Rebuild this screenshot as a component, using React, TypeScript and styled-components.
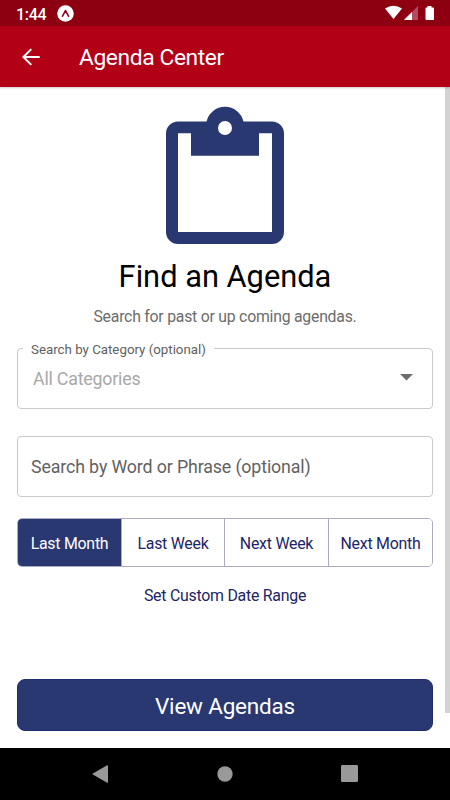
import React from "react";
import styled, { createGlobalStyle } from "styled-components";

const GlobalStyle = createGlobalStyle`
  *, *::before, *::after { box-sizing: border-box; }
  body { margin: 0; background: #fff; font-family: Roboto, "Liberation Sans", sans-serif; }
  button { font-family: inherit; padding: 0; }
  svg { display: block; flex: none; }
`;

const Screen = styled.div`
  width: 450px;
  height: 800px;
  display: flex;
  flex-direction: column;
  overflow: hidden;
  background: #fff;
`;

const StatusBar = styled.div`
  height: 26px;
  flex: none;
  display: flex;
  align-items: center;
  padding: 0 15px 0 16px;
  background: #8d0012;
  color: #fff;
`;

const Clock = styled.span`
  width: 41px;
  padding-top: 3px;
  font-size: 16px;
  letter-spacing: -0.3px;
  line-height: 23px;
  font-weight: 500;
`;

const StatusIcons = styled.div`
  margin-left: auto;
  display: flex;
  align-items: center;
`;

const AppBar = styled.header`
  position: relative;
  height: 61px;
  flex: none;
  display: flex;
  align-items: center;
  padding: 0 22px;
  background: #b20017;
  color: #fff;
  box-shadow: 0 1px 2px rgba(0, 0, 0, 0.2);
`;

const BackButton = styled.button`
  width: 57px;
  border: 0;
  background: none;
  color: inherit;
`;

const AppTitle = styled.h1`
  margin: 0;
  font-size: 22.8px;
  letter-spacing: -0.4px;
  line-height: 30px;
  font-weight: 400;
  padding-top: 3px;
`;

const Body = styled.div`
  height: 661px;
  flex: none;
  display: flex;
`;

const Content = styled.main`
  width: 446px;
  padding: 19px 13px 0 17px;
  display: flex;
  flex-direction: column;
  align-items: center;
`;

const ScrollThumb = styled.div`
  width: 5px;
  margin-left: -1px;
  height: 626px;
  background: #d3d3d3;
`;

const Heading = styled.h2`
  margin: 14px 0 0;
  font-size: 30.8px;
  line-height: 38px;
  font-weight: 400;
  color: #000;
  white-space: nowrap;
`;

const Subtitle = styled.p`
  margin: 11px 0 0;
  font-size: 15.8px;
  letter-spacing: -0.23px;
  line-height: 20px;
  color: #6c6c6c;
  white-space: nowrap;
`;

const SelectField = styled.fieldset`
  width: 416px;
  height: 69px;
  margin: 13px 0 0;
  padding: 0 19px 0 15px;
  border: 1px solid #cacaca;
  border-radius: 4px;
  flex: none;
`;

const Legend = styled.legend`
  margin-left: -10px;
  padding: 2px 8px 0;
  font-size: 13.3px;
  line-height: 15px;
  letter-spacing: 0;
  color: #606060;
  white-space: nowrap;
`;

const SelectValue = styled.div`
  height: 43px;
  display: flex;
  align-items: center;
  justify-content: space-between;
  font-size: 17.8px;
  letter-spacing: -0.2px;
  color: #a8a8a8;

  svg { margin-bottom: 3px; }
`;

const TextField = styled.input`
  width: 416px;
  height: 61px;
  flex: none;
  margin: 27px 0 0;
  padding: 0 13px;
  border: 1px solid #cacaca;
  border-radius: 4px;
  font-family: inherit;
  font-size: 17.8px;
  letter-spacing: -0.13px;
  background: #fff;
  &::placeholder { color: #626262; opacity: 1; }
`;

const Segments = styled.div`
  width: 416px;
  height: 49px;
  flex: none;
  margin-top: 21px;
  display: grid;
  grid-template-columns: 104px 103px 104px 103px;
  border: 1px solid #aaaac2;
  border-radius: 5px;
  overflow: hidden;
`;

const Segment = styled.button<{ $active?: boolean }>`
  border: 0;
  border-right: 1px solid #aaaac2;
  background: ${(p) => (p.$active ? "#293870" : "#fff")};
  color: ${(p) => (p.$active ? "#fff" : "#1c2568")};
  font-size: 15.9px;
  letter-spacing: -0.25px;
  white-space: nowrap;
  padding-top: 1px;
  &:last-child { border-right: 0; }
`;

const RangeLink = styled.button`
  margin-top: 19px;
  border: 0;
  background: none;
  color: #1c2568;
  font-size: 15.9px;
  letter-spacing: -0.25px;
  line-height: 20px;
  white-space: nowrap;
`;

const PrimaryButton = styled.button`
  width: 416px;
  height: 52px;
  margin-top: auto;
  margin-bottom: 17px;
  padding-top: 1px;
  flex: none;
  border: 1px solid #202e70;
  border-radius: 8px;
  background: #293870;
  color: #fff;
  font-size: 22.5px;
  letter-spacing: -0.2px;
`;

const NavBar = styled.nav`
  height: 52px;
  flex: none;
  display: flex;
  justify-content: center;
  align-items: center;
  gap: 108px;
  padding: 0 1px 1px 0;
  background: #000;
`;

const ExpoIcon = () => (
  <svg width="17" height="17" viewBox="0 0 17 17">
    <circle cx="8.5" cy="8.5" r="8.3" fill="#fff" />
    <path d="M5.5 11.2 8.5 5.5 11.5 11.2" fill="none" stroke="#8d0012" strokeWidth="1.6" strokeLinecap="round" strokeLinejoin="round" />
  </svg>
);

const ConnectivityIcons = () => (
  <svg width="50" height="16" viewBox="385 5 50 16">
    <path d="M385 8.500Q393.500 3.100 402 8.500L393.500 19Z" fill="#fff" />
    <path d="M418 6V20H404Z" fill="#b54b5b" />
    <path d="M412 12V20H404Z" fill="#fff" />
    <path d="M427.500 6H431.500V7.500H433.200Q434 7.500 434 8.300V19.200Q434 20 433.200 20H426.300Q425.500 20 425.500 19.200V8.300Q425.500 7.500 426.300 7.500H427.500Z" fill="#fff" />
  </svg>
);

const BackIcon = () => (
  <svg width="19" height="18" viewBox="0 0 19 18">
    <path d="M17.700 9H1.500M9.300 1.100 1.400 9 9.300 16.900" fill="none" stroke="#fff" strokeWidth="2" />
  </svg>
);

const ClipboardIcon = () => (
  <svg width="118" height="138" viewBox="166 106 118 138">
    <path
      fill="#293870"
      fillRule="evenodd"
      d="M178 121.500H206.500A19 19 0 0 1 243.500 121.500H272A12 12 0 0 1 284 133.500V232A12 12 0 0 1 272 244H178A12 12 0 0 1 166 232V133.500A12 12 0 0 1 178 121.500ZM178 133.300V232H272V133.300H259V155.700H191V133.300ZM232 128A7 7 0 1 0 218 128A7 7 0 1 0 232 128Z"
    />
  </svg>
);

const CaretIcon = () => (
  <svg width="13" height="7" viewBox="0 0 13 7">
    <path d="M0 0H13L6.500 6.500Z" fill="#6c6c6c" />
  </svg>
);

const NavBack = () => (
  <svg width="17" height="18" viewBox="0 0 17 18">
    <path d="M15.200.2Q16 0 16 .8V17.200Q16 18 15.200 17.800L.8 9.500Q.2 9 .8 8.500Z" fill="#999" />
  </svg>
);

const NavHome = () => (
  <svg width="16" height="16" viewBox="0 0 16 16">
    <circle cx="8" cy="8" r="7.700" fill="#999" />
  </svg>
);

const NavRecent = () => (
  <svg width="17" height="17" viewBox="0 0 17 17">
    <rect width="17" height="17" rx="1.200" fill="#999" />
  </svg>
);

const ranges = ["Last Month", "Last Week", "Next Week", "Next Month"];

export default function App() {
  return (
    <>
      <GlobalStyle />
      <Screen>
        <StatusBar>
          <Clock>1:44</Clock>
          <ExpoIcon />
          <StatusIcons>
            <ConnectivityIcons />
          </StatusIcons>
        </StatusBar>
        <AppBar>
          <BackButton aria-label="Back">
            <BackIcon />
          </BackButton>
          <AppTitle>Agenda Center</AppTitle>
        </AppBar>
        <Body>
          <Content>
            <ClipboardIcon />
            <Heading>Find an Agenda</Heading>
            <Subtitle>Search for past or up coming agendas.</Subtitle>
            <SelectField>
              <Legend>Search by Category (optional)</Legend>
              <SelectValue>
                All Categories
                <CaretIcon />
              </SelectValue>
            </SelectField>
            <TextField placeholder="Search by Word or Phrase (optional)" />
            <Segments>
              {ranges.map((label, i) => (
                <Segment key={label} $active={i === 0}>
                  {label}
                </Segment>
              ))}
            </Segments>
            <RangeLink>Set Custom Date Range</RangeLink>
            <PrimaryButton>View Agendas</PrimaryButton>
          </Content>
          <ScrollThumb />
        </Body>
        <NavBar>
          <NavBack />
          <NavHome />
          <NavRecent />
        </NavBar>
      </Screen>
    </>
  );
}
